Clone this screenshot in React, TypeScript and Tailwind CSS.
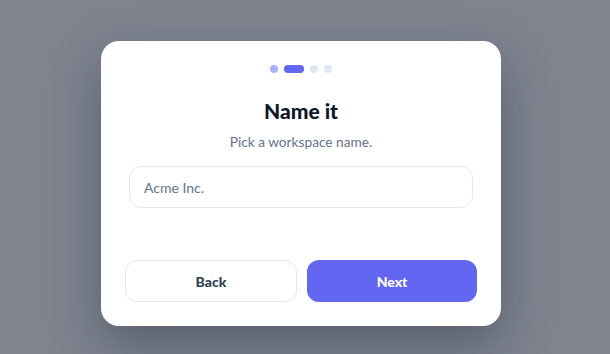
import React from "react";

export default function App() {
  return (
    <div
      className="w-[610px] h-[354px] bg-[#7f848f] flex items-start justify-start pl-[101px] pt-[41px]"
      style={{ fontFamily: '"Lato", "Noto Sans", sans-serif' }}
    >
      <div className="w-[400px] h-[285px] bg-white rounded-[18px] shadow-[0_20px_50px_rgba(15,23,42,0.35)] px-6 pt-6 pb-6 flex flex-col">
        <div className="flex items-center justify-center gap-1.5 h-2">
          <span className="w-2 h-2 rounded-full bg-[#a5b4fc]" />
          <span className="w-5 h-2 rounded-full bg-[#6366f1]" />
          <span className="w-2 h-2 rounded-full bg-[#e2e8f0]" />
          <span className="w-2 h-2 rounded-full bg-[#e2e8f0]" />
        </div>
        <h1 className="mt-6 text-center text-[21px] leading-[28px] font-black text-[#0f172a]">
          Name it
        </h1>
        <p className="mt-[7px] text-center text-[13.7px] leading-[20px] text-[#64748b]">
          Pick a workspace name.
        </p>
        <input
          className="mt-3.5 mx-1 h-[42px] rounded-xl border border-[#e2e8f0] px-3.5 text-[14px] text-[#0f172a] placeholder:text-[#64748b] outline-none"
          placeholder="Acme Inc."
        />
        <div className="mt-[52px] flex gap-2.5">
          <button className="flex-1 h-[42px] rounded-xl border border-[#e2e8f0] bg-white text-[14px] font-black text-[#334155]">
            Back
          </button>
          <button className="flex-1 h-[42px] rounded-xl bg-[#6366f1] text-[14px] font-black text-white">
            Next
          </button>
        </div>
      </div>
    </div>
  );
}
